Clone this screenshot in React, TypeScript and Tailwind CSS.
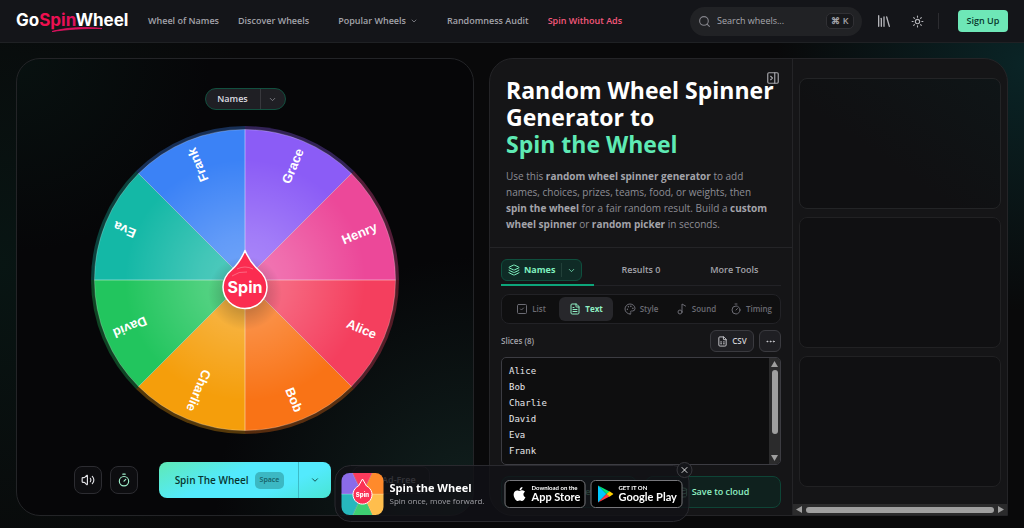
import { ReactNode } from "react";
import {
  ChevronDown,
  Database,
  Ellipsis,
  FileSpreadsheet,
  FileText,
  Layers,
  Library,
  Music2,
  Palette,
  PanelRightClose,
  Save,
  Search,
  ShieldCheck,
  SquareCheck,
  Sun,
  Timer,
  Volume2,
  X,
} from "lucide-react";
import { FaApple } from "react-icons/fa";

const SLICES = [
  { name: "Alice", color: "#f43f5e" },
  { name: "Bob", color: "#f97316" },
  { name: "Charlie", color: "#f59e0b" },
  { name: "David", color: "#22c55e" },
  { name: "Eva", color: "#14b8a6" },
  { name: "Frank", color: "#3b82f6" },
  { name: "Grace", color: "#8b5cf6" },
  { name: "Henry", color: "#ec4899" },
];

function slicePath(index: number, radius: number) {
  const step = (Math.PI * 2) / SLICES.length;
  const a = index * step;
  const b = a + step;
  return `M0 0L${radius * Math.cos(a)} ${radius * Math.sin(a)}A${radius} ${radius} 0 0 1 ${radius * Math.cos(b)} ${radius * Math.sin(b)}Z`;
}

function Logo() {
  return (
    <svg viewBox="0 0 112 28" className="w-[112px] h-7" role="img" aria-label="GoSpinWheel">
      <defs>
        <linearGradient id="logo-spin" x1="0" x2="1">
          <stop offset="0.3" stopColor="#f0104f" />
          <stop offset="1" stopColor="#b5127c" />
        </linearGradient>
      </defs>
      <text x="0" y="19" fontSize="17" fontWeight="700" fontFamily="Inter, sans-serif" fill="#fff">
        Go
        <tspan fill="url(#logo-spin)">Spin</tspan>
        Wheel
      </text>
      <path d="M36 24.500C50 20.500 70 19.500 86 21.500C68 21.200 50 22.500 36 24.500Z" fill="#e0115f" stroke="#e0115f" strokeWidth="0.8" />
    </svg>
  );
}

function Wheel() {
  return (
    <svg viewBox="-154 -154 308 308" className="w-full max-w-[308px]" role="img" aria-label="Wheel of names">
      <defs>
        <radialGradient id="shine">
          <stop offset="0" stopColor="#fff" stopOpacity="0.28" />
          <stop offset="0.3" stopColor="#fff" stopOpacity="0.2" />
          <stop offset="0.8" stopColor="#fff" stopOpacity="0" />
        </radialGradient>
        <radialGradient id="hub-shadow">
          <stop offset="0.5" stopColor="#000" stopOpacity="0.18" />
          <stop offset="1" stopColor="#000" stopOpacity="0" />
        </radialGradient>
      </defs>
      {SLICES.map((slice, i) => (
        <path key={slice.name} d={slicePath(i, 154)} fill={slice.color} opacity="0.33" />
      ))}
      {SLICES.map((slice, i) => (
        <path key={slice.name} d={slicePath(i, 150.5)} fill={slice.color} />
      ))}
      <circle r="150.5" fill="url(#shine)" />
      {SLICES.map((slice, i) => (
        <path key={slice.name} d={slicePath(i, 150.5)} fill="none" stroke="#fff" strokeOpacity="0.3" strokeWidth="0.8" />
      ))}
      {SLICES.map((slice, i) => (
        <text
          key={slice.name}
          x="142"
          y="5"
          textAnchor="end"
          transform={`rotate(${(i + 0.5) * (360 / SLICES.length)})`}
          fontSize="13"
          fontWeight="700"
          fontFamily="'Liberation Sans', sans-serif"
          fill="#fff"
        >
          {slice.name}
        </text>
      ))}
      <circle cy="13" r="37" fill="url(#hub-shadow)" />
      <path
        d="M0 -29.500C4 -20 8 -15 13 -10.500C19 -5.500 22 0.500 22 7A22 21.500 0 0 1 -22 7C-22 0.500 -19 -5.500 -13 -10.500C-8 -15 -4 -20 0 -29.500Z"
        fill="#fb2c50"
        stroke="#fff"
        strokeWidth="1.500"
        strokeLinejoin="round"
      />
      <path d="M-8 -11Q0 -15 8 -11M-13 -4Q-6 -9 2 -8" fill="none" stroke="#fff" strokeOpacity="0.35" strokeWidth="0.8" />
      <text y="13" textAnchor="middle" fontSize="16" fontWeight="700" fontFamily="Inter, sans-serif" fill="#fff">
        Spin
      </text>
    </svg>
  );
}

function AppIcon() {
  return (
    <svg viewBox="-21 -21 42 42" className="size-[42px] shrink-0 rounded-lg" aria-hidden="true">
      <g stroke="#fff" strokeOpacity="0.4" strokeWidth="0.5">
        <path d="M0 0H30V30H14Z" fill="#ffbe4d" />
        <path d="M0 0L14 30H-14Z" fill="#3ecf72" />
        <path d="M0 0L-14 30H-30V0Z" fill="#27b7bd" />
        <path d="M0 0H-30V-30H-14Z" fill="#8b6be8" />
        <path d="M0 0L-14 -30H14Z" fill="#fb3b5c" />
        <path d="M0 0L14 -30H30V0Z" fill="#ff8a2b" />
      </g>
      <path d="M0 -15L4 -8A9.500 9.500 0 1 1 -4 -8Z" fill="#fb3155" stroke="#fff" strokeWidth="1" />
      <text y="2.500" textAnchor="middle" fontSize="6" fontWeight="800" fontFamily="Inter, sans-serif" fill="#fff">
        Spin
      </text>
    </svg>
  );
}

function PlayLogo() {
  return (
    <svg viewBox="0 0 16 18" className="w-4 h-[18px] shrink-0" aria-hidden="true">
      <path d="M0.500 0.500V17.500L9 9Z" fill="#00c8ff" />
      <path d="M0.500 0.500L12 6.500L9 9Z" fill="#00e676" />
      <path d="M0.500 17.500L12 11.500L9 9Z" fill="#ff3a44" />
      <path d="M12 6.300L16 9L12 11.700L9 9Z" fill="#ffd000" />
    </svg>
  );
}

function EditorTab({ icon, label, active }: { icon: ReactNode; label: string; active?: boolean }) {
  return (
    <button
      className={
        active
          ? "flex items-center justify-center gap-1 h-6 rounded-md bg-[#27272b] text-[#8ff0c4] font-bold"
          : "flex items-center justify-center gap-1 h-6 rounded-md text-[#6b6b73] font-semibold"
      }
    >
      {icon}
      {label}
    </button>
  );
}

function Header() {
  return (
    <header className="flex items-center h-[43px] px-4 bg-[#141519] border-b border-[#1f2124]">
      <a href="#" className="shrink-0">
        <Logo />
      </a>
      <nav className="flex items-center gap-[19px] ml-5 text-[9px] font-semibold text-[#a3a3aa] whitespace-nowrap">
        <a href="#">Wheel of Names</a>
        <a href="#">Discover Wheels</a>
        <button className="flex items-center gap-1 mx-2.5">
          Popular Wheels
          <ChevronDown size={8} />
        </button>
        <a href="#">Randomness Audit</a>
        <a href="#" className="text-[#f4587b]">Spin Without Ads</a>
      </nav>
      <div className="flex items-center ml-auto">
        <label className="flex items-center gap-1.5 w-[172px] h-[29px] px-2 rounded-full bg-[#212225] text-[#85858c]">
          <Search size={13} className="shrink-0" />
          <input
            aria-label="Search wheels"
            placeholder="Search wheels..."
            className="min-w-0 flex-1 bg-transparent text-[9px] font-medium outline-none placeholder:text-[#a8a8ae]"
          />
          <kbd className="flex items-center justify-center w-7 h-4 rounded-[5px] border border-[#303034] bg-[#17181b] font-[inherit] text-[9px] font-semibold text-[#a4a4aa] whitespace-nowrap">
            ⌘ K
          </kbd>
        </label>
        <button aria-label="Library" className="ml-3.5 text-[#b5b5ba]">
          <Library size={16} />
        </button>
        <button aria-label="Theme" className="ml-[19px] text-[#b5b5ba]">
          <Sun size={13} />
        </button>
        <span className="ml-3.5 w-px h-4 bg-[#2c2c30]" />
        <button className="ml-[19px] w-[50px] h-[22px] rounded-[4px] bg-[#6ee7b7] text-[9px] font-semibold text-[#07382c]">
          Sign Up
        </button>
      </div>
    </header>
  );
}

function WheelPanel() {
  return (
    <section className="flex flex-col items-center pt-[29px] pb-[15px] rounded-3xl border border-[#232427] bg-[#060608] bg-[radial-gradient(circle_at_0%_0%,#081110_0%,transparent_30%),radial-gradient(circle_at_100%_100%,#11211f_0%,transparent_40%)]">
      <div className="flex items-center h-[22px] rounded-full border border-[#12503f] bg-[#1f1f24] text-[9px] font-semibold text-[#dcdce0]">
        <button className="w-[54px] h-full">Names</button>
        <button aria-label="Choose wheel" className="flex items-center justify-center w-[25px] h-full border-l border-[#38383d] text-[#92929a]">
          <ChevronDown size={9} />
        </button>
      </div>
      <div className="flex justify-center w-full mt-4">
        <Wheel />
      </div>
      <div className="grid grid-cols-[1fr_auto_1fr] items-center gap-x-[21px] w-full mt-[28px]">
        <div className="flex justify-end gap-2">
          <button aria-label="Volume" className="flex items-center justify-center size-7 rounded-lg border border-[#2c2c31] bg-[#0d0d10] text-[#e0e0e4]">
            <Volume2 size={14} />
          </button>
          <button aria-label="Timer" className="flex items-center justify-center size-7 rounded-lg border border-[#2c2c31] bg-[#0d0d10] text-[#a0f0cb]">
            <Timer size={14} />
          </button>
        </div>
        <div className="flex h-9 rounded-lg bg-[linear-gradient(155deg,#5fe9b5_0%,#53eafd_40%,#53eafd_70%,#48e5d2_100%)] text-[#08352f]">
          <button className="flex items-center gap-1.5 pl-4 pr-3.5 text-[10px] font-semibold">
            Spin The Wheel
            <kbd className="flex items-center h-[17px] px-[5px] rounded-[5px] bg-[#3cb8c3] font-[inherit] text-[7px] text-[#155e65]">Space</kbd>
          </button>
          <button aria-label="Spin options" className="flex items-center justify-center w-[33px] border-l border-[#3cbcc7]">
            <ChevronDown size={10} />
          </button>
        </div>
        <button className="flex items-center justify-center gap-1 w-[78px] h-7 rounded-lg border border-[#2c2c31] bg-[#111417] text-[9px] font-semibold text-[#b5b5ba]">
          <ShieldCheck size={11} />
          Ad-Free
        </button>
      </div>
    </section>
  );
}

function EditorPanel() {
  return (
    <div className="relative flex flex-col w-[303px] shrink-0 border-r border-[#242427]">
      <button aria-label="Collapse panel" className="absolute top-3 right-3 text-[#a5a5ab]">
        <PanelRightClose size={14} />
      </button>
      <div className="pt-[18px] pb-[15px] px-4 border-b border-[#242427]">
        <h1 className="text-[23px] leading-[27px] font-bold text-white whitespace-nowrap">
          Random Wheel Spinner
          <br />
          Generator to
          <br />
          <span className="text-[#5eeab4]">Spin the Wheel</span>
        </h1>
        <p className="mt-2.5 text-[10px] leading-4 text-[#8d8d95] whitespace-nowrap [&_strong]:text-[#a3a3aa]">
          Use this <strong>random wheel spinner generator</strong> to add
          <br />
          names, choices, prizes, teams, food, or weights, then
          <br />
          <strong>spin the wheel</strong> for a fair random result. Build a <strong>custom</strong>
          <br />
          <strong>wheel spinner</strong> or <strong>random picker</strong> in seconds.
        </p>
      </div>

      <div className="flex flex-col px-[11px] pt-[11px] pb-[7px]">
        <div className="grid grid-cols-3 h-[27px] border-b border-[#222226] text-[9px] font-semibold text-[#a3a3aa]">
          <div className="h-[27px] border-b-2 border-[#0da57a]">
            <div className="flex items-center w-[81px] h-[22px] rounded-md border border-[#0f4f3e] bg-[#0f2b26] text-[#7ff0bf]">
              <button className="flex items-center gap-1 px-1.5 font-bold">
                <Layers size={12} />
                Names
              </button>
              <button aria-label="Switch list" className="flex flex-1 items-center justify-center h-3.5 border-l border-[#224039]">
                <ChevronDown size={9} />
              </button>
            </div>
          </div>
          <button className="h-[22px]">Results 0</button>
          <button className="h-[22px]">More Tools</button>
        </div>

        <div className="grid grid-cols-5 gap-px mt-2 p-0.5 rounded-lg border border-[#222226] bg-[#0f0f10] text-[8px]">
          <EditorTab icon={<SquareCheck size={12} />} label="List" />
          <EditorTab icon={<FileText size={12} />} label="Text" active />
          <EditorTab icon={<Palette size={12} />} label="Style" />
          <EditorTab icon={<Music2 size={12} />} label="Sound" />
          <EditorTab icon={<Timer size={12} />} label="Timing" />
        </div>

        <div className="flex items-center gap-[5px] mt-1.5 text-[8px] font-semibold">
          <label htmlFor="slices" className="mr-auto text-[#a3a3aa]">Slices (8)</label>
          <button className="flex items-center justify-center gap-1 w-11 h-[22px] rounded-md border border-[#3a3a3f] bg-[#1f1f23] text-[#d0d0d4]">
            <FileSpreadsheet size={11} />
            CSV
          </button>
          <button aria-label="More actions" className="flex items-center justify-center size-[22px] rounded-md border border-[#3a3a3f] bg-[#1f1f23] text-[#d0d0d4]">
            <Ellipsis size={11} />
          </button>
        </div>

        <div className="flex h-[108px] mt-[5px] rounded-[5px] border border-[#3c3c42] bg-[#0e0e0f] overflow-hidden">
          <textarea
            id="slices"
            defaultValue={SLICES.map((slice) => slice.name).join("\n")}
            className="flex-1 min-w-0 mb-1 pl-[7px] pt-[5px] resize-none overflow-hidden bg-transparent font-['DejaVu_Sans_Mono',monospace] text-[9px] leading-4 text-[#e6e6ea] outline-none"
          />
          <div className="flex flex-col items-center w-[11px] py-[3px] bg-[#2b2b2c]" aria-hidden="true">
            <svg viewBox="0 0 7 6" className="w-[7px] h-1.5" fill="#9f9f9f"><path d="M0 6L3.500 0L7 6Z" /></svg>
            <div className="w-1.5 h-16 mt-[3px] rounded-full bg-[#9f9f9f]" />
            <svg viewBox="0 0 7 6" className="w-[7px] h-1.5 mt-auto" fill="#9f9f9f"><path d="M0 0L3.500 6L7 0Z" /></svg>
          </div>
        </div>

        <div className="grid grid-cols-2 gap-2 mt-[11px] text-[9px] font-semibold text-[#8ff0c4]">
          <button className="flex items-center justify-center gap-1 h-8 rounded-lg border border-[#0e4436] bg-[#0f211e]">
            <Save size={11} />
            Save to device
          </button>
          <button className="flex items-center justify-center gap-1 h-8 rounded-lg border border-[#0e4436] bg-[#0f211e]">
            <Database size={11} />
            Save to cloud
          </button>
        </div>
      </div>
    </div>
  );
}

function SidePanel() {
  return (
    <aside className="flex flex-col flex-1 min-w-0">
      <div className="flex flex-col gap-2 px-1.5 pt-[19px]">
        <div className="h-[131px] rounded-lg border border-[#232426] bg-[linear-gradient(215deg,#0f1517_0%,#101012_60%)]" />
        <div className="h-[131px] rounded-lg border border-[#212123] bg-[#101012]" />
        <div className="h-[131px] rounded-lg border border-[#212123] bg-[#101012]" />
      </div>
      <div className="flex items-center gap-1 h-[11px] mt-auto px-[3px] bg-[#2b2b2c]" aria-hidden="true">
        <svg viewBox="0 0 6 7" className="w-1.5 h-[7px]" fill="#9f9f9f"><path d="M6 0L0 3.500L6 7Z" /></svg>
        <div className="flex-1 h-1.5 rounded-full bg-[#9f9f9f]" />
        <svg viewBox="0 0 6 7" className="w-1.5 h-[7px]" fill="#9f9f9f"><path d="M0 0L6 3.500L0 7Z" /></svg>
      </div>
    </aside>
  );
}

function AppBanner() {
  return (
    <div className="fixed bottom-1.5 left-1/2 -translate-x-1/2 flex items-center w-[355px] h-[57px] px-1.5 rounded-2xl border border-[#29292e] bg-[#111217]/80">
      <AppIcon />
      <div className="ml-1.5 whitespace-nowrap">
        <p className="text-[11px] leading-[14px] font-bold text-white">Spin the Wheel</p>
        <p className="text-[8px] leading-3 font-medium text-[#a0a0a6]">Spin once, move forward.</p>
      </div>
      <div className="flex gap-[5px] ml-auto text-white whitespace-nowrap">
        <a href="#" className="flex items-center gap-1 w-[81px] h-7 pl-1.5 rounded-[5px] border border-[#77777b] bg-black">
          <FaApple size={16} className="shrink-0" />
          <span className="flex flex-col font-['Lato',sans-serif]">
            <span className="text-[6px] leading-[7px] font-bold">Download on the</span>
            <span className="text-[11px] leading-[12px] font-bold">App Store</span>
          </span>
        </a>
        <a href="#" className="flex items-center gap-[5px] w-[92px] h-7 pl-1.5 rounded-[5px] border border-[#77777b] bg-black">
          <PlayLogo />
          <span className="flex flex-col font-['Lato',sans-serif]">
            <span className="text-[6px] leading-[7px] font-bold">GET IT ON</span>
            <span className="text-[11px] leading-[12px] font-bold">Google Play</span>
          </span>
        </a>
      </div>
      <button aria-label="Close" className="absolute -top-1 -right-1 flex items-center justify-center size-4 rounded-full border border-[#38383d] bg-[#141519] text-white">
        <X size={10} />
      </button>
    </div>
  );
}

export default function App() {
  return (
    <div className="min-h-screen bg-[#09090a] bg-[radial-gradient(circle_at_100%_12%,#0a2426_0%,transparent_22%),radial-gradient(circle_at_0%_50%,#081513_0%,transparent_30%)] font-['Open_Sans','Noto_Sans',sans-serif]">
      <Header />
      <main className="grid grid-cols-[458fr_519fr] gap-[15px] px-4 pt-[15px] pb-3">
        <WheelPanel />
        <section className="flex rounded-3xl rounded-br-none border border-[#242427] bg-[#151517] overflow-hidden">
          <EditorPanel />
          <SidePanel />
        </section>
      </main>
      <AppBanner />
    </div>
  );
}
